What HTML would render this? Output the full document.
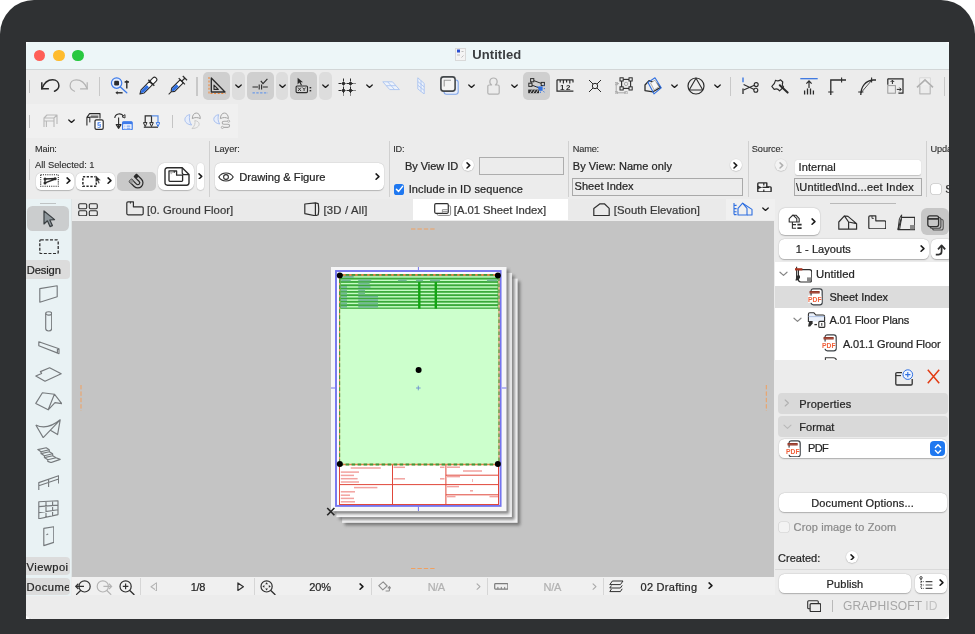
<!DOCTYPE html>
<html lang="en"><head><meta charset="utf-8"><title>Untitled</title>
<style>
html,body{margin:0;padding:0;}
body{width:975px;height:634px;overflow:hidden;background:#fff;position:relative;font-family:"Liberation Sans",sans-serif;}
#root{position:absolute;left:0;top:0;width:975px;height:634px;overflow:hidden;will-change:transform;}
#root div,#root span,#root svg{position:absolute;display:block;}
#root span{white-space:nowrap;-webkit-text-stroke:0.23px currentColor;}
</style></head>
<body>
<div id="root">
<div style="left:0px;top:0px;width:975px;height:634px;background:#2f3133;border-radius:34px 34px 0 0;"></div>
<div style="left:26px;top:42px;width:923px;height:577px;background:#ececec;border-radius:0 0 5px 5px;box-shadow:0 0 0 0 #fff;"></div>
<div style="left:26px;top:42px;width:923px;height:27px;background:#edf6f8;"></div>
<div style="left:26px;top:69px;width:923px;height:1px;background:#d2d6d7;"></div>
<div style="left:33.6px;top:49.7px;width:11.8px;height:11.8px;background:#fe5f57;border-radius:5.9px;"></div>
<div style="left:53.1px;top:49.7px;width:11.8px;height:11.8px;background:#febc2e;border-radius:5.9px;"></div>
<div style="left:72.3px;top:49.7px;width:11.8px;height:11.8px;background:#28c840;border-radius:5.9px;"></div>
<svg style="left:454.7px;top:48.3px;" width="11" height="13" viewBox="0 0 11 13"><rect x="0.5" y="0.5" width="10" height="12" fill="#f4f4f4" stroke="#d9d9d9"/><rect x="2" y="1.5" width="3" height="3" fill="#2a4fd0"/><path d="M2 7h3M6.5 3.5h2M6.5 9.5l2 -2" stroke="#bdbdbd" fill="none"/></svg>
<span style="left:472.3px;top:47px;height:16px;line-height:16px;font-size:13px;color:#3a3d40;font-weight:bold;letter-spacing:0.077px;-webkit-text-stroke:0;">Untitled</span>
<svg style="left:26px;top:42px" width="5" height="5" viewBox="0 0 5 5"><path d="M0 0 H5 Q0 0 0 5 Z" fill="#fbfdfd"/></svg>
<svg style="left:944px;top:42px" width="5" height="5" viewBox="0 0 5 5"><path d="M5 0 H0 Q5 0 5 5 Z" fill="#fbfdfd"/></svg>
<div style="left:26px;top:70px;width:923px;height:69px;background:#ececec;"></div>
<div style="left:26px;top:104px;width:212px;height:34px;background:#f0f0f0;"></div>
<div style="left:28.95px;top:80px;width:1.1px;height:12.5px;background:#bdbdbd;"></div>
<svg style="left:40px;top:78px;" width="21" height="15" viewBox="0 0 21 15"><path d="M1.8 10.8 C4 5 8 1.8 12.6 1.8 C16.5 1.8 18.9 4.5 18.9 7.7 C18.9 10 17 12 14.5 13.2" fill="none" stroke="#2b2b2b" stroke-width="1.5" stroke-linecap="round"/><path d="M1.8 4.3 V10.8 H8.9" fill="none" stroke="#2b2b2b" stroke-width="1.5" stroke-linecap="butt" stroke-linejoin="miter"/></svg>
<svg style="left:68.4px;top:78px;" width="21" height="15" viewBox="0 0 21 15"><g transform="translate(21,0) scale(-1,1)"><path d="M1.8 10.8 C4 5 8 1.8 12.6 1.8 C16.5 1.8 18.9 4.5 18.9 7.7 C18.9 10 17 12 14.5 13.2" fill="none" stroke="#b4b4b4" stroke-width="1.2" stroke-linecap="round"/><path d="M1.8 4.3 V10.8 H8.9" fill="none" stroke="#b4b4b4" stroke-width="1.2" stroke-linecap="butt" stroke-linejoin="miter"/></g></svg>
<div style="left:98.65px;top:76.5px;width:1.1px;height:19.5px;background:#c8c8c8;"></div>
<svg style="left:110.2px;top:77.2px;" width="20" height="18" viewBox="0 0 20 18"><circle cx="6.6" cy="6.1" r="5.2" fill="#e3ebfb" stroke="#3d7bea" stroke-width="1.2"/><path d="M10.4 9.9 L16.8 15.8" stroke="#3d7bea" stroke-width="1.3" stroke-linecap="round"/><rect x="4.2" y="3.7" width="4.8" height="4.8" rx="1.2" fill="#2b2b2b"/><path d="M16.8 11.6 V4.6 M14.6 5 H19" fill="none" stroke="#2b2b2b" stroke-width="1.4"/><path d="M15 4.9 L16.8 3 L18.6 4.9 Z" fill="#2b2b2b"/><path d="M12.6 15.8 H7" fill="none" stroke="#2b2b2b" stroke-width="1.4"/><path d="M7.6 14 L5.4 15.8 L7.6 17.6 Z" fill="#2b2b2b"/></svg>
<svg style="left:135px;top:72.6px;" width="26" height="26" viewBox="0 0 26 26"><g transform="translate(13 13) rotate(45)"><path d="M-2.2 -4.2 V7.6 L0 11.4 L2.2 7.6 V-4.2 Z" fill="#fff" stroke="#2b2b2b" stroke-width="1.1" stroke-linejoin="round"/><path d="M-1.6 0.2 V7.6 L0 10.4 L1.6 7.6 V0.2 Z" fill="#2f6fe0"/><rect x="-2.3" y="-11.4" width="4.6" height="7" rx="2.1" fill="#fff" stroke="#2b2b2b" stroke-width="1.1"/><rect x="-4.2" y="-5.4" width="8.4" height="1.4" fill="#2b2b2b"/></g></svg>
<svg style="left:164.1px;top:72.9px;" width="26" height="26" viewBox="0 0 26 26"><g transform="translate(13 13) rotate(45)"><path d="M-2.2 -6.6 V5.4 L-0.6 7.6 H0.6 L2.2 5.4 V-6.6 Z" fill="#fff" stroke="#2b2b2b" stroke-width="1.1" stroke-linejoin="round"/><path d="M-1.6 -0.8 V5.2 L-0.4 7 H0.4 L1.6 5.2 V-0.8 Z" fill="#2f6fe0"/><path d="M0 7.6 V11.8" stroke="#2b2b2b" stroke-width="1"/><path d="M-4.4 -6.8 H4.4 M0 -6.8 V-11 M-3 -11.2 H3" stroke="#2b2b2b" stroke-width="1.2" fill="none"/></g></svg>
<div style="left:196.45px;top:76.5px;width:1.1px;height:19.5px;background:#c8c8c8;"></div>
<div style="left:203.3px;top:72px;width:27.1px;height:27.5px;background:#cfcfcf;border-radius:5px;"></div>
<div style="left:232.3px;top:72px;width:12.5px;height:27.5px;background:#dddddd;border-radius:5px;"></div>
<svg style="left:235.09px;top:84.16px;" width="7.02" height="4.68" viewBox="0 0 9 6"><path d="M1 1.2 L4.5 4.4 L8 1.2" fill="none" stroke="#1a1a1a" stroke-width="1.6" stroke-linecap="round" stroke-linejoin="round"/></svg>
<svg style="left:207.8px;top:75.8px;" width="18" height="19" viewBox="0 0 18 19"><path d="M1 1 V17.5 H17.5" fill="none" stroke="#f0883a" stroke-width="1.1" stroke-dasharray="2 1.6"/><path d="M3.3 2 V16 H17 Z" fill="none" stroke="#2b2b2b" stroke-width="1.3" stroke-linejoin="round"/><path d="M6 9.2 V13.4 H10.3 Z" fill="none" stroke="#2b2b2b" stroke-width="1.1" stroke-linejoin="round"/></svg>
<div style="left:246.6px;top:72px;width:27.4px;height:27.5px;background:#cfcfcf;border-radius:5px;"></div>
<div style="left:275.9px;top:72px;width:12.5px;height:27.5px;background:#dddddd;border-radius:5px;"></div>
<svg style="left:278.69px;top:84.16px;" width="7.02" height="4.68" viewBox="0 0 9 6"><path d="M1 1.2 L4.5 4.4 L8 1.2" fill="none" stroke="#1a1a1a" stroke-width="1.6" stroke-linecap="round" stroke-linejoin="round"/></svg>
<svg style="left:251.2px;top:77.5px;" width="18" height="16" viewBox="0 0 18 16"><path d="M1.5 9 H7 M8.2 6.6 V11.4 M10.6 6.6 V11.4 M11.8 9 H16.8" stroke="#2b2b2b" stroke-width="1.1" fill="none"/><path d="M9.8 2.8 L12 5.6 L16.4 0.8" fill="none" stroke="#2b2b2b" stroke-width="1.1"/><path d="M1.5 14.8 H17" stroke="#6d9be8" stroke-width="1.2" stroke-dasharray="2.4 1.4"/></svg>
<div style="left:290.2px;top:72px;width:27.3px;height:27.5px;background:#cfcfcf;border-radius:5px;"></div>
<div style="left:319.1px;top:72px;width:12.9px;height:27.5px;background:#dddddd;border-radius:5px;"></div>
<svg style="left:321.99px;top:84.16px;" width="7.02" height="4.68" viewBox="0 0 9 6"><path d="M1 1.2 L4.5 4.4 L8 1.2" fill="none" stroke="#1a1a1a" stroke-width="1.6" stroke-linecap="round" stroke-linejoin="round"/></svg>
<svg style="left:295px;top:77px;" width="18" height="17" viewBox="0 0 18 17"><path d="M2.6 0.8 V7.4 L4.4 5.6 L6 8.6 L7 8 L5.6 5.2 H8 Z" fill="#2b2b2b"/><rect x="1.1" y="9" width="11.4" height="6.6" rx="1" fill="none" stroke="#2b2b2b" stroke-width="1.1"/><path d="M3 10.6 L6 14 M6 10.6 L3 14 M7.6 10.6 L9.1 12.3 L10.6 10.6 M9.1 12.3 V14" stroke="#2b2b2b" stroke-width="0.9" fill="none"/><rect x="14.6" y="10" width="1.6" height="1.4" fill="#2b2b2b"/><rect x="14.6" y="13" width="1.6" height="1.4" fill="#2b2b2b"/></svg>
<svg style="left:338.4px;top:77.8px;" width="18" height="18" viewBox="0 0 18 18"><path d="M0.5 5.5 H17.5 M0.5 12.5 H17.5 M5.5 0.5 V17.5 M12.5 0.5 V17.5" stroke="#2b2b2b" stroke-width="1" stroke-dasharray="3 1" fill="none"/><circle cx="5.5" cy="5.5" r="1.7" fill="#2b2b2b"/><circle cx="12.5" cy="5.5" r="1.7" fill="#2b2b2b"/><circle cx="5.5" cy="12.5" r="1.7" fill="#2b2b2b"/><circle cx="12.5" cy="12.5" r="1.7" fill="#2b2b2b"/></svg>
<svg style="left:366.09px;top:84.16px;" width="7.02" height="4.68" viewBox="0 0 9 6"><path d="M1 1.2 L4.5 4.4 L8 1.2" fill="none" stroke="#1a1a1a" stroke-width="1.6" stroke-linecap="round" stroke-linejoin="round"/></svg>
<svg style="left:382.1px;top:81.4px;" width="18.2" height="9.4" viewBox="0 0 18.2 9.4"><path d="M0.8 0.8 H10.5 L17.4 8.6 H7.8 Z" fill="#eef3fb" stroke="#a9c3f0" stroke-width="0.9" stroke-linejoin="round"/><path d="M5.65 0.8 L12.6 8.6 M4.3 4.7 H13.95" fill="none" stroke="#a9c3f0" stroke-width="0.9"/></svg>
<svg style="left:416.6px;top:76.8px;" width="8" height="17.6" viewBox="0 0 8 17.6"><path d="M0.8 0.8 L7.2 6.4 V17 L0.8 11.9 Z" fill="#eef3fb" stroke="#a9c3f0" stroke-width="0.9" stroke-linejoin="round"/><path d="M4 3.6 V14.4 M0.8 4.5 L7.2 9.9 M0.8 8.2 L7.2 13.4" fill="none" stroke="#a9c3f0" stroke-width="0.9"/></svg>
<svg style="left:439.7px;top:76.2px;" width="19" height="19" viewBox="0 0 19 19"><rect x="4" y="4" width="14.2" height="14.2" rx="2.4" fill="#e8eefa" stroke="#7fa5ea" stroke-width="1.1"/><rect x="0.9" y="0.9" width="14.2" height="14.2" rx="2.6" fill="#f4f4f4" stroke="#43474a" stroke-width="1.6"/><path d="M4.2 10.6 V4.2 H11" fill="none" stroke="#9a9a9a" stroke-width="1.1"/></svg>
<svg style="left:467.59px;top:84.16px;" width="7.02" height="4.68" viewBox="0 0 9 6"><path d="M1 1.2 L4.5 4.4 L8 1.2" fill="none" stroke="#1a1a1a" stroke-width="1.6" stroke-linecap="round" stroke-linejoin="round"/></svg>
<svg style="left:486.6px;top:76.5px;" width="13" height="18" viewBox="0 0 13 18"><path d="M4.6 8 C1.6 5.6 2.6 1 6.5 1 C10.4 1 11.4 5.6 8.4 8 H10.8 Q12.2 8 12.2 9.4 V15.8 Q12.2 17.2 10.8 17.2 H2.2 Q0.8 17.2 0.8 15.8 V9.4 Q0.8 8 2.2 8 Z" fill="none" stroke="#b2b2b2" stroke-width="1.2" stroke-linejoin="round"/></svg>
<svg style="left:511.09px;top:84.16px;" width="7.02" height="4.68" viewBox="0 0 9 6"><path d="M1 1.2 L4.5 4.4 L8 1.2" fill="none" stroke="#1a1a1a" stroke-width="1.6" stroke-linecap="round" stroke-linejoin="round"/></svg>
<div style="left:522.6px;top:72px;width:27.8px;height:27.5px;background:#cfcfcf;border-radius:5px;"></div>
<svg style="left:527.4px;top:77.5px;" width="18" height="17" viewBox="0 0 18 17"><path d="M5.2 2 L15.8 6 M3.4 6.6 L12 9.8 M5.2 2 L3.4 6.6" fill="none" stroke="#2b2b2b" stroke-width="1"/><rect x="3.6" y="0.6" width="3.2" height="3.2" fill="#cfcfcf" stroke="#2b2b2b" stroke-width="1"/><rect x="14.2" y="4.4" width="3.2" height="3.2" fill="#cfcfcf" stroke="#2b2b2b" stroke-width="1"/><rect x="1.8" y="5.2" width="3.2" height="3.2" fill="#cfcfcf" stroke="#2b2b2b" stroke-width="1"/><rect x="11.2" y="8.4" width="4.4" height="4.4" fill="#2f6fe0"/><path d="M16.4 8 L17.6 6.8 M16.8 10.6 H18 M16.4 13.2 L17.6 14.4 M13.4 13.6 V15 M10.4 9 L9.4 8" stroke="#2f6fe0" stroke-width="0.9"/><rect x="1.2" y="11.6" width="10.8" height="3.6" fill="#2b2b2b"/><path d="M3 15.2 L5.4 11.6 M6 15.2 L8.4 11.6 M9 15.2 L11.4 11.6" stroke="#cfcfcf" stroke-width="0.9"/></svg>
<svg style="left:556.2px;top:78.7px;" width="18" height="14" viewBox="0 0 18 14"><path d="M1 0.8 V12.2 H17.4 M1 0.8 H17.4 M4.2 0.8 V3.4 M7.4 0.8 V4.6 M10.6 0.8 V3.4 M13.8 0.8 V4.6 M17 0.8 V3.4" fill="none" stroke="#2b2b2b" stroke-width="1.2"/><text x="10" y="11" font-size="8" font-weight="bold" font-family="Liberation Sans, sans-serif" text-anchor="middle" fill="#2b2b2b" letter-spacing="1.5">12</text></svg>
<svg style="left:587.5px;top:78.7px;" width="14" height="14" viewBox="0 0 14 14"><path d="M1 1 L13 13 M13 1 L1 13" stroke="#2b2b2b" stroke-width="1"/><circle cx="7" cy="7" r="2.7" fill="#ececec" stroke="#2b2b2b" stroke-width="1"/></svg>
<svg style="left:615px;top:76.8px;" width="18" height="17" viewBox="0 0 18 17"><path d="M1.2 6.6 V15.8 H11 M1.2 6.6 H4" fill="none" stroke="#a9a9a9" stroke-width="1"/><rect x="0" y="5.4" width="2.4" height="2.4" fill="none" stroke="#a9a9a9" stroke-width="0.8"/><rect x="0" y="14.6" width="2.4" height="2.4" fill="none" stroke="#a9a9a9" stroke-width="0.8"/><rect x="9.8" y="14.6" width="2.4" height="2.4" fill="none" stroke="#a9a9a9" stroke-width="0.8"/><rect x="6.6" y="2.4" width="9" height="9" fill="none" stroke="#2b2b2b" stroke-width="1.1"/><circle cx="11.1" cy="6.9" r="1.7" fill="none" stroke="#9a9a9a" stroke-width="0.8"/><rect x="5" y="0.8" width="3.2" height="3.2" fill="#ececec" stroke="#2b2b2b" stroke-width="1"/><rect x="14" y="0.8" width="3.2" height="3.2" fill="#ececec" stroke="#2b2b2b" stroke-width="1"/><rect x="5" y="9.8" width="3.2" height="3.2" fill="#ececec" stroke="#2b2b2b" stroke-width="1"/><rect x="14" y="9.8" width="3.2" height="3.2" fill="#ececec" stroke="#2b2b2b" stroke-width="1"/></svg>
<svg style="left:644px;top:76.5px;" width="18" height="18" viewBox="0 0 18 18"><path d="M1 13.6 V8 L5 3.6 L12 5.8 L16.6 10.4 L9 14.8 Z" fill="none" stroke="#2b2b2b" stroke-width="1.3" stroke-linejoin="round"/><path d="M4 5.4 L11 0.8 L17.2 10.8 L10 16.8 Z" fill="none" stroke="#2f6fe0" stroke-width="1.1" stroke-linejoin="round"/><path d="M6.6 6 L11 3.2 L14.8 9.6 L10.2 13 Z" fill="#f7f7f7" stroke="#9a9a9a" stroke-width="0.7"/></svg>
<svg style="left:670.79px;top:84.16px;" width="7.02" height="4.68" viewBox="0 0 9 6"><path d="M1 1.2 L4.5 4.4 L8 1.2" fill="none" stroke="#1a1a1a" stroke-width="1.6" stroke-linecap="round" stroke-linejoin="round"/></svg>
<svg style="left:687px;top:76.7px;" width="18" height="18" viewBox="0 0 18 18"><circle cx="9" cy="9" r="8" fill="none" stroke="#2b2b2b" stroke-width="1.2"/><path d="M9 1.2 L15.8 13 H2.2 Z" fill="none" stroke="#2b2b2b" stroke-width="1.1" stroke-linejoin="round"/></svg>
<svg style="left:714.49px;top:84.16px;" width="7.02" height="4.68" viewBox="0 0 9 6"><path d="M1 1.2 L4.5 4.4 L8 1.2" fill="none" stroke="#1a1a1a" stroke-width="1.6" stroke-linecap="round" stroke-linejoin="round"/></svg>
<div style="left:730.35px;top:76.5px;width:1.1px;height:19.5px;background:#c8c8c8;"></div>
<svg style="left:741.8px;top:76.8px;" width="18" height="17.6" viewBox="0 0 18 17.6"><path d="M1 0.4 V5.2" stroke="#2f6fe0" stroke-width="1.3"/><path d="M1 11.6 V17" stroke="#2b2b2b" stroke-width="1.3"/><path d="M1.6 7.4 L12.2 12.4 M1.6 13 L12.4 8.2" stroke="#2b2b2b" stroke-width="1.1"/><circle cx="14.2" cy="7.6" r="2" fill="none" stroke="#2b2b2b" stroke-width="1.1"/><circle cx="13.8" cy="13.2" r="2" fill="none" stroke="#2b2b2b" stroke-width="1.1"/></svg>
<svg style="left:770.5px;top:78.5px;" width="18" height="15" viewBox="0 0 18 15"><path d="M4.6 1.2 C6.4 2.4 8.2 1.8 9.6 0.8 L11.8 3 C11 5 11.4 6.8 12.6 8 L8.6 11.8 C7.2 10 5 9.6 3.2 10.4 L0.8 7.4 C2.6 6 4.2 3.6 4.6 1.2 Z" fill="none" stroke="#2b2b2b" stroke-width="1.1" stroke-linejoin="round"/><path d="M8.8 6.2 L16.6 13.6" stroke="#2b2b2b" stroke-width="2" stroke-linecap="round"/></svg>
<svg style="left:799.7px;top:77.5px;" width="18" height="17" viewBox="0 0 18 17"><path d="M0.3 0.7 H17.7" stroke="#2f6fe0" stroke-width="1.2"/><path d="M9 10 V3.2 M6.4 5.6 L9 2.8 L11.6 5.6" fill="none" stroke="#2b2b2b" stroke-width="1.2"/><path d="M4.6 16.6 V12.4 M7.5 16.6 V10.6 M10.5 16.6 V10.6 M13.4 16.6 V12.4" stroke="#2b2b2b" stroke-width="1.3"/></svg>
<svg style="left:828.3px;top:76.5px;" width="18" height="18" viewBox="0 0 18 18"><path d="M2.8 18 V3 H18" fill="none" stroke="#2b2b2b" stroke-width="1.3"/><path d="M13.6 0.4 V5.6 M0.2 15 H5.4" stroke="#2b2b2b" stroke-width="1.1"/></svg>
<svg style="left:857.6px;top:76.5px;" width="18" height="18" viewBox="0 0 18 18"><path d="M2.8 18 C2.8 9 8 3.6 15 3 H18" fill="none" stroke="#2b2b2b" stroke-width="1.3"/><path d="M2.8 16 L13.6 3.4" fill="none" stroke="#2b2b2b" stroke-width="0.8"/><path d="M13.6 0.4 V5.6 M0.2 15 H5.4" stroke="#2b2b2b" stroke-width="1.1"/></svg>
<svg style="left:887.3px;top:77.7px;" width="17" height="16" viewBox="0 0 17 16"><path d="M0.8 0.8 H16 V15.2 H11.4" fill="none" stroke="#2b2b2b" stroke-width="1.2"/><path d="M0.8 0.8 V6.8" stroke="#2b2b2b" stroke-width="1.2"/><rect x="0.8" y="7.6" width="7.6" height="7.6" fill="none" stroke="#9a9a9a" stroke-width="1"/><path d="M5.4 6 V2.4 M3.6 4 L5.4 2.2 L7.2 4 M9.8 11.4 H14 M12.4 9.6 L14.2 11.4 L12.4 13.2" fill="none" stroke="#2b2b2b" stroke-width="1"/></svg>
<svg style="left:916px;top:77px;" width="18" height="18" viewBox="0 0 18 18"><path d="M3.6 8 V0.8 H14.4 V8" fill="#f1f1f1" stroke="#d6d6d6" stroke-width="0.9"/><path d="M1 10.4 L9 3 L17 10.4" fill="none" stroke="#b0b0b0" stroke-width="1.7" stroke-linejoin="miter"/><path d="M3.8 9 V16.8 H14.2 V9" fill="none" stroke="#bababa" stroke-width="1.2" stroke-linejoin="round"/></svg>
<div style="left:943.75px;top:76.5px;width:1.1px;height:19.5px;background:#c8c8c8;"></div>
<div style="left:29.25px;top:115.3px;width:1.1px;height:13.1px;background:#bdbdbd;"></div>
<svg style="left:42.5px;top:114.3px;" width="15" height="14" viewBox="0 0 15 14"><path d="M1 13 V4 L4 1 H14 V10 M1 4 H11 L14 1 M11 4 V13 M1 7 H11 M3.4 13 V7" fill="none" stroke="#b9b9b9" stroke-width="1.1" stroke-linejoin="round"/></svg>
<svg style="left:68.29px;top:119.46px;" width="7.02" height="4.68" viewBox="0 0 9 6"><path d="M1 1.2 L4.5 4.4 L8 1.2" fill="none" stroke="#1a1a1a" stroke-width="1.6" stroke-linecap="round" stroke-linejoin="round"/></svg>
<svg style="left:85.6px;top:112px;" width="18" height="18" viewBox="0 0 18 18"><path d="M0.9 13.6 V5.4 L3.6 1.6 H14 V6.6 M0.9 5.4 H4" fill="none" stroke="#2b2b2b" stroke-width="1.1" stroke-linejoin="round"/><path d="M3.8 10.4 V6 L5 4.4" fill="none" stroke="#2b2b2b" stroke-width="1"/><path d="M5 3.4 H12.4 V6 H4.2 Z" fill="#6f6f6f"/><rect x="9" y="7.8" width="8.2" height="9.6" rx="1.4" fill="#fff" stroke="#2b2b2b" stroke-width="1.2"/><text x="13.1" y="15.4" font-size="7.6" font-weight="bold" font-family="Liberation Sans, sans-serif" text-anchor="middle" fill="#3d7bea">§</text></svg>
<svg style="left:113.5px;top:112.5px;" width="19" height="17.4" viewBox="0 0 19 17.4"><path d="M4.6 4.4 V15 M2.2 11.6 L4.6 15.4 L7 11.6 Z" fill="none" stroke="#2b2b2b" stroke-width="1.1" stroke-linejoin="round"/><path d="M0.8 5 C1 0.4 7.6 -0.6 9.4 3.2" fill="none" stroke="#2b2b2b" stroke-width="1.1"/><path d="M8 3.8 L11 1.6 V5 Z" fill="none" stroke="#2b2b2b" stroke-width="0.9" stroke-linejoin="round"/><rect x="8.6" y="8.8" width="9.6" height="8" rx="1" fill="#fff" stroke="#3d7bea" stroke-width="1.2"/><rect x="8.6" y="8.6" width="9.6" height="2.6" fill="#3d7bea"/><path d="M10.4 13.1 H11.4 M12.6 13.1 H16.4 M10.4 15.2 H11.4 M12.6 15.2 H16.4" stroke="#3d7bea" stroke-width="0.9"/></svg>
<svg style="left:143.1px;top:114.9px;" width="17" height="13.4" viewBox="0 0 17 13.4"><path d="M2.2 8 V0.8 H8.5 V8" fill="none" stroke="#2b2b2b" stroke-width="1.2"/><path d="M8.5 0.8 H15 V8" fill="none" stroke="#5b8fe6" stroke-width="1.2"/><path d="M0.8 12.2 H15" stroke="#2b2b2b" stroke-width="1.2"/><path d="M0.4 7.6 H4 L2.2 11.6 Z M6.7 7.6 H10.3 L8.5 11.6 Z" fill="#f0f0f0" stroke="#2b2b2b" stroke-width="1" stroke-linejoin="round"/><path d="M13.2 7.6 H16.8 L15 11.6 Z" fill="#f0f0f0" stroke="#3d7bea" stroke-width="1" stroke-linejoin="round"/></svg>
<div style="left:172.15px;top:115.3px;width:1.1px;height:13.1px;background:#c4c4c4;"></div>
<svg style="left:184px;top:112px;" width="18" height="18" viewBox="0 0 18 18"><path d="M5.8 2.6 C-1 4 -1 12 7.6 13 C5.4 10.4 4.9 6 5.8 2.6 Z" fill="#e6edfb" stroke="#a9c0ee" stroke-width="1"/><path d="M8.3 6.6 C8.3 -0.8 16.3 -0.8 16.3 6.6 C14 5.2 10.6 5.2 8.3 6.6 Z" fill="none" stroke="#a4a4a4" stroke-width="1"/><path d="M10.8 8.6 C17 9.2 17 16.2 8 16.6 C10.6 14 11.6 11.2 10.8 8.6 Z" fill="none" stroke="#cbcbcb" stroke-width="1"/></svg>
<svg style="left:213px;top:112px;" width="18" height="18" viewBox="0 0 18 18"><path d="M5.6 2.6 C-1 4 -1 11 6.8 12 C5 9.8 4.6 5.8 5.6 2.6 Z" fill="#e6edfb" stroke="#a9c0ee" stroke-width="1"/><path d="M7.4 6.6 C7.4 -0.8 15.4 -0.8 15.4 6.6 C13.1 5.2 9.7 5.2 7.4 6.6 Z" fill="none" stroke="#a4a4a4" stroke-width="1"/><path d="M14.6 9.2 H11 C8.6 9.2 8.6 12.3 11 12.3 H14.8 C17.2 12.3 17.2 15.4 14.8 15.4 H10.4" fill="none" stroke="#ababab" stroke-width="1.1"/><circle cx="15.6" cy="9.2" r="1.1" fill="#f0f0f0" stroke="#ababab" stroke-width="0.9"/><circle cx="9.4" cy="15.4" r="1.1" fill="#f0f0f0" stroke="#ababab" stroke-width="0.9"/></svg>
<div style="left:26px;top:139px;width:923px;height:60px;background:#ececec;"></div>
<div style="left:29.2px;top:158.5px;width:1px;height:21.5px;background:#c9c9c9;"></div>
<span style="left:35px;top:140.5px;height:16px;line-height:16px;font-size:9.2px;color:#2e2e2e;letter-spacing:-0.140px;-webkit-text-stroke:0.12px currentColor;">Main:</span>
<span style="left:214.5px;top:140.5px;height:16px;line-height:16px;font-size:9.2px;color:#2e2e2e;letter-spacing:-0.062px;-webkit-text-stroke:0.12px currentColor;">Layer:</span>
<span style="left:393.3px;top:140.5px;height:16px;line-height:16px;font-size:9.2px;color:#2e2e2e;letter-spacing:-0.252px;-webkit-text-stroke:0.12px currentColor;">ID:</span>
<span style="left:572.8px;top:140.5px;height:16px;line-height:16px;font-size:9.2px;color:#2e2e2e;letter-spacing:-0.180px;-webkit-text-stroke:0.12px currentColor;">Name:</span>
<span style="left:751.8px;top:140.5px;height:16px;line-height:16px;font-size:9.2px;color:#2e2e2e;letter-spacing:-0.072px;-webkit-text-stroke:0.12px currentColor;">Source:</span>
<span style="left:930.6px;top:140.5px;height:16px;line-height:16px;font-size:9.2px;color:#2e2e2e;letter-spacing:-0.175px;-webkit-text-stroke:0.12px currentColor;">Update:</span>
<div style="left:208.8px;top:140.5px;width:1px;height:56.5px;background:#d0d0d0;"></div>
<div style="left:388.5px;top:140.5px;width:1px;height:56.5px;background:#d0d0d0;"></div>
<div style="left:568.3px;top:140.5px;width:1px;height:56.5px;background:#d0d0d0;"></div>
<div style="left:747.5px;top:140.5px;width:1px;height:56.5px;background:#d0d0d0;"></div>
<div style="left:925.8px;top:140.5px;width:1px;height:56.5px;background:#d0d0d0;"></div>
<span style="left:35px;top:157px;height:16px;line-height:16px;font-size:9.4px;color:#2e2e2e;letter-spacing:-0.026px;-webkit-text-stroke:0.12px currentColor;">All Selected: 1</span>
<div style="left:35.7px;top:172.8px;width:38.4px;height:17.2px;background:#ffffff;border-radius:5px;box-shadow:0 0.5px 1.1px rgba(0,0,0,0.22),0 0 0 0.5px rgba(0,0,0,0.04);"></div>
<svg style="left:39.9px;top:174.4px;" width="19" height="13" viewBox="0 0 19 13"><rect x="0.7" y="0.7" width="17.6" height="11.6" fill="none" stroke="#2b2b2b" stroke-width="1.1" stroke-dasharray="1.1 1.1"/><path d="M5 4.9 L15.4 4.6 M5 8.9 L15.4 5" stroke="#2b2b2b" stroke-width="1.5" fill="none"/><path d="M5 4.9 V8.9" stroke="#2b2b2b" stroke-width="1.2"/><circle cx="5" cy="4.9" r="1.5" fill="#2b2b2b"/><circle cx="5" cy="8.9" r="1.5" fill="#2b2b2b"/><circle cx="15.2" cy="4.7" r="1.5" fill="#2b2b2b"/></svg>
<svg style="left:65.8px;top:177px;" width="5.4" height="7.2" viewBox="0 0 6 8"><path d="M1.2 1 L4.4 4 L1.2 7" fill="none" stroke="#1a1a1a" stroke-width="1.7" stroke-linecap="round" stroke-linejoin="round"/></svg>
<div style="left:76.3px;top:172.8px;width:38.9px;height:17.2px;background:#ffffff;border-radius:5px;box-shadow:0 0.5px 1.1px rgba(0,0,0,0.22),0 0 0 0.5px rgba(0,0,0,0.04);"></div>
<svg style="left:81.7px;top:174.6px;" width="19.4" height="12" viewBox="0 0 19.4 12"><rect x="0.9" y="1.8" width="13.4" height="9.4" fill="none" stroke="#2b2b2b" stroke-width="1.5" stroke-dasharray="2.3 1.5"/><path d="M13.6 0.4 V7.4 L15.3 5.9 L16.6 8.7 L17.9 8.1 L16.6 5.4 L18.9 5.2 Z" fill="#2b2b2b" stroke="#fff" stroke-width="0.4"/></svg>
<svg style="left:106.7px;top:177px;" width="5.4" height="7.2" viewBox="0 0 6 8"><path d="M1.2 1 L4.4 4 L1.2 7" fill="none" stroke="#1a1a1a" stroke-width="1.7" stroke-linecap="round" stroke-linejoin="round"/></svg>
<div style="left:117.2px;top:172.4px;width:38.4px;height:18.2px;background:#c9c9c9;border-radius:5px;"></div>
<svg style="left:128.2px;top:172.8px;" width="19" height="19" viewBox="0 0 19 19"><g transform="rotate(-45 9.5 9.5)"><path d="M4.4 3 V10 A5.1 5.1 0 0 0 14.6 10 V3 H11.4 V10 A1.9 1.9 0 0 1 7.6 10 V3 Z" fill="#c9c9c9" stroke="#2b2b2b" stroke-width="1.2" stroke-linejoin="round"/><rect x="4.4" y="2.6" width="3.2" height="3.4" fill="#9a9a9a"/><rect x="11.4" y="2.6" width="3.2" height="3.4" fill="#2b2b2b"/></g></svg>
<div style="left:157.9px;top:163.2px;width:36.6px;height:26.5px;background:#ffffff;border-radius:6.5px;box-shadow:0 0.5px 1.1px rgba(0,0,0,0.22),0 0 0 0.5px rgba(0,0,0,0.04);"></div>
<svg style="left:163.5px;top:166.9px;" width="26" height="19" viewBox="0 0 26 19"><path d="M1 3.2 Q1 0.8 3.4 0.8 H18.2 L25 7.6 V15.8 Q25 18.2 22.6 18.2 H3.4 Q1 18.2 1 15.8 Z" fill="none" stroke="#2b2b2b" stroke-width="1.4" stroke-linejoin="round"/><path d="M18.2 0.8 V5.4 Q18.2 7.6 20.4 7.6 H25" fill="none" stroke="#2b2b2b" stroke-width="1.2"/><path d="M5 4 H12.6 V8.2 H18.6 V13.6 Q18.6 14.4 17.8 14.4 H5.8 Q5 14.4 5 13.6 Z" fill="none" stroke="#2b2b2b" stroke-width="1.3" stroke-linejoin="round"/><path d="M5.6 4.4 H10 L7 7.4 Z" fill="#b9b9b9"/><path d="M10.2 4 V6" stroke="#2b2b2b" stroke-width="1"/></svg>
<div style="left:196.5px;top:163.1px;width:7.4px;height:27px;background:#ffffff;border-radius:3.7px;box-shadow:0 0.5px 1.1px rgba(0,0,0,0.22),0 0 0 0.5px rgba(0,0,0,0.04);"></div>
<svg style="left:198.15px;top:172.6px;" width="5.1" height="6.8" viewBox="0 0 6 8"><path d="M1.2 1 L4.4 4 L1.2 7" fill="none" stroke="#1a1a1a" stroke-width="1.7" stroke-linecap="round" stroke-linejoin="round"/></svg>
<div style="left:214.6px;top:163.2px;width:169px;height:26.8px;background:#ffffff;border-radius:5.5px;box-shadow:0 0.5px 1.1px rgba(0,0,0,0.22),0 0 0 0.5px rgba(0,0,0,0.04);"></div>
<svg style="left:217.7px;top:172px;" width="16" height="10" viewBox="0 0 16 10"><path d="M0.8 5 C4 -0.4 12 -0.4 15.2 5 C12 10.4 4 10.4 0.8 5 Z" fill="none" stroke="#2b2b2b" stroke-width="1.1"/><circle cx="8" cy="5" r="2.4" fill="none" stroke="#2b2b2b" stroke-width="1.1"/></svg>
<span style="left:239.2px;top:169px;height:16px;line-height:16px;font-size:11.2px;color:#262626;letter-spacing:-0.008px;">Drawing &amp; Figure</span>
<svg style="left:374.5px;top:172.8px;" width="5.4" height="7.2" viewBox="0 0 6 8"><path d="M1.2 1 L4.4 4 L1.2 7" fill="none" stroke="#1a1a1a" stroke-width="1.7" stroke-linecap="round" stroke-linejoin="round"/></svg>
<span style="left:404.9px;top:158px;height:16px;line-height:16px;font-size:11px;color:#262626;letter-spacing:-0.029px;">By View ID</span>
<div style="left:462px;top:159.4px;width:12px;height:12px;background:#fff;border-radius:6px;box-shadow:0 0.5px 1.1px rgba(0,0,0,0.22),0 0 0 0.5px rgba(0,0,0,0.04);"></div>
<svg style="left:465.85px;top:162px;" width="5.1" height="6.8" viewBox="0 0 6 8"><path d="M1.2 1 L4.4 4 L1.2 7" fill="none" stroke="#1a1a1a" stroke-width="1.7" stroke-linecap="round" stroke-linejoin="round"/></svg>
<div style="left:478.5px;top:157.2px;width:85.1px;height:18px;background:#ececec;box-sizing:border-box;border:1.6px solid #adadad;"></div>
<div style="left:393.6px;top:184px;width:10.8px;height:10.6px;background:#1f78f0;border-radius:2.6px;"></div>
<svg style="left:394.5px;top:185.3px;" width="9" height="8" viewBox="0 0 9 8"><path d="M1.4 4.2 L3.6 6.4 L7.6 1.4" fill="none" stroke="#fff" stroke-width="1.5" stroke-linecap="round" stroke-linejoin="round"/></svg>
<span style="left:408.7px;top:181.3px;height:16px;line-height:16px;font-size:11px;color:#262626;letter-spacing:0.109px;">Include in ID sequence</span>
<span style="left:572.8px;top:158px;height:16px;line-height:16px;font-size:11px;color:#262626;letter-spacing:0.054px;">By View: Name only</span>
<div style="left:729.6px;top:159.4px;width:12px;height:12px;background:#fff;border-radius:6px;box-shadow:0 0.5px 1.1px rgba(0,0,0,0.22),0 0 0 0.5px rgba(0,0,0,0.04);"></div>
<svg style="left:733.45px;top:162px;" width="5.1" height="6.8" viewBox="0 0 6 8"><path d="M1.2 1 L4.4 4 L1.2 7" fill="none" stroke="#1a1a1a" stroke-width="1.7" stroke-linecap="round" stroke-linejoin="round"/></svg>
<div style="left:572px;top:177.6px;width:170.8px;height:18.2px;background:#ececec;box-sizing:border-box;border:1.6px solid #a9a9a9;"></div>
<span style="left:574.6px;top:178.4px;height:16px;line-height:16px;font-size:11px;color:#262626;letter-spacing:0.026px;">Sheet Index</span>
<div style="left:775px;top:159.2px;width:12px;height:12px;background:#f3f3f3;border-radius:6px;box-shadow:0 0.5px 1.1px rgba(0,0,0,0.22),0 0 0 0.5px rgba(0,0,0,0.04);"></div>
<svg style="left:778.85px;top:161.8px;" width="5.1" height="6.8" viewBox="0 0 6 8"><path d="M1.2 1 L4.4 4 L1.2 7" fill="none" stroke="#b0b0b0" stroke-width="1.7" stroke-linecap="round" stroke-linejoin="round"/></svg>
<div style="left:795px;top:159.6px;width:126px;height:15px;background:#ffffff;border-radius:2.5px;box-shadow:0 0.5px 1px rgba(0,0,0,0.18);"></div>
<span style="left:798.6px;top:159.2px;height:16px;line-height:16px;font-size:11px;color:#262626;letter-spacing:0.064px;">Internal</span>
<svg style="left:756.5px;top:181.5px;" width="15" height="10.8" viewBox="0 0 15 10.8"><path d="M1.6 0.9 H9.8 V4.9 H13.3 Q14.1 4.9 14.1 5.7 V9.1 Q14.1 9.9 13.3 9.9 H1.6 Q0.8 9.9 0.8 9.1 V1.7 Q0.8 0.9 1.6 0.9 Z" fill="#f7f7f7" stroke="#2b2b2b" stroke-width="1.4" stroke-linejoin="round"/><path d="M0.8 4.4 L3.6 5.4 L0.8 6.4 M6.8 0.9 V3.4 M6.8 7.4 V9.9 M5.4 5.4 H12" fill="none" stroke="#2b2b2b" stroke-width="1.2"/></svg>
<div style="left:794.3px;top:177.6px;width:127.3px;height:18px;background:#ececec;box-sizing:border-box;border:1.6px solid #a9a9a9;"></div>
<span style="left:796px;top:178.8px;height:16px;line-height:16px;font-size:11px;color:#262626;letter-spacing:0.195px;">\Untitled\Ind...eet Index</span>
<div style="left:931.3px;top:184px;width:10.2px;height:10.4px;background:#ffffff;border-radius:2.6px;box-shadow:0 0 0 0.6px rgba(0,0,0,0.2);"></div>
<span style="left:945.2px;top:181.3px;height:16px;line-height:16px;font-size:11px;color:#262626;">S</span>
<div style="left:72px;top:198.6px;width:702px;height:21.8px;background:#eaeaea;"></div>
<div style="left:413.3px;top:198.6px;width:154.7px;height:21.8px;background:#ffffff;"></div>
<div style="left:726px;top:198.6px;width:48.5px;height:21.8px;background:#f0f0f0;"></div>
<svg style="left:77.5px;top:202.7px;" width="20" height="13.4" viewBox="0 0 20 13.4"><rect x="0.7" y="0.7" width="8" height="5" rx="1.2" fill="none" stroke="#2f2f2f" stroke-width="1.1"/><rect x="11.3" y="0.7" width="8" height="5" rx="1.2" fill="none" stroke="#2f2f2f" stroke-width="1.1"/><rect x="0.7" y="7.7" width="8" height="5" rx="1.2" fill="none" stroke="#2f2f2f" stroke-width="1.1"/><rect x="11.3" y="7.7" width="8" height="5" rx="1.2" fill="none" stroke="#2f2f2f" stroke-width="1.1"/></svg>
<svg style="left:126.4px;top:201.4px;" width="18" height="14.6" viewBox="0 0 18 14.6"><path d="M0.8 2 Q0.8 0.8 2 0.8 H7.4 V5.8 H16 Q17.2 5.8 17.2 7 V12.6 Q17.2 13.8 16 13.8 H2 Q0.8 13.8 0.8 12.6 Z" fill="none" stroke="#2f2f2f" stroke-width="1.2" stroke-linejoin="round"/><path d="M4.4 0.8 V2.6" stroke="#2f2f2f" stroke-width="1"/></svg>
<span style="left:147px;top:201.6px;height:16px;line-height:16px;font-size:11.3px;color:#3a3a3a;letter-spacing:0.052px;">[0. Ground Floor]</span>
<svg style="left:303.6px;top:201.7px;" width="16" height="14.6" viewBox="0 0 16 14.6"><path d="M0.8 2 L11.4 0.8 V13.8 L0.8 11.6 Z" fill="none" stroke="#2f2f2f" stroke-width="1.2" stroke-linejoin="round"/><path d="M11.4 0.8 L14.2 1.6 Q15.2 7.2 14.2 12.8 L11.4 13.8" fill="none" stroke="#2f2f2f" stroke-width="1.2" stroke-linejoin="round"/></svg>
<span style="left:323.5px;top:201.6px;height:16px;line-height:16px;font-size:11.3px;color:#3a3a3a;letter-spacing:0.192px;">[3D / All]</span>
<svg style="left:434.3px;top:203.3px;" width="17.4" height="13" viewBox="0 0 17.4 13"><rect x="3.2" y="2.8" width="13.4" height="9.6" rx="1.2" fill="none" stroke="#8a8a8a" stroke-width="1"/><rect x="0.7" y="0.7" width="13.6" height="9.6" rx="1.2" fill="#fff" stroke="#2f2f2f" stroke-width="1.2"/><path d="M8.4 10.2 V6.6 H14.2 M8.4 8.4 H14.2" fill="none" stroke="#8a8a8a" stroke-width="0.9"/></svg>
<span style="left:453.8px;top:201.6px;height:16px;line-height:16px;font-size:11.3px;color:#3a3a3a;letter-spacing:-0.043px;">[A.01 Sheet Index]</span>
<svg style="left:593.3px;top:202.5px;" width="17" height="13.4" viewBox="0 0 17 13.4"><path d="M0.8 12.6 V5.4 L7 0.8 H11.4 L16.2 5.4 V12.6 Z" fill="none" stroke="#2f2f2f" stroke-width="1.2" stroke-linejoin="round"/></svg>
<span style="left:613.8px;top:201.6px;height:16px;line-height:16px;font-size:11.3px;color:#3a3a3a;letter-spacing:0.045px;">[South Elevation]</span>
<svg style="left:732.6px;top:202.2px;" width="20" height="14" viewBox="0 0 20 14"><path d="M1 1 V12.6 M1 3.4 H3.6 M1 6.6 H3.6 M1 9.8 H3.6 M1 12.6 H3.6" fill="none" stroke="#2f6fe0" stroke-width="1.1"/><path d="M5 13 V6.4 L9.6 1.2 L14 6.4 V13 Z" fill="none" stroke="#2f6fe0" stroke-width="1.1" stroke-linejoin="round"/><path d="M9.6 1.2 L19 7.4 V13 H14" fill="none" stroke="#2f6fe0" stroke-width="1.1" stroke-linejoin="round"/></svg>
<svg style="left:762.09px;top:207.26px;" width="7.02" height="4.68" viewBox="0 0 9 6"><path d="M1 1.2 L4.5 4.4 L8 1.2" fill="none" stroke="#1a1a1a" stroke-width="1.6" stroke-linecap="round" stroke-linejoin="round"/></svg>
<div style="left:26px;top:199px;width:45px;height:397px;background:#e9f2f4;"></div>
<div style="left:71px;top:199px;width:1px;height:378px;background:#dfe5e6;"></div>
<div style="left:40.2px;top:202.7px;width:16.2px;height:1px;background:#bfc3c4;"></div>
<div style="left:27.3px;top:205.9px;width:42.2px;height:25.3px;background:#cbcdce;border-radius:5.5px;"></div>
<svg style="left:43.1px;top:209.6px;" width="13" height="18" viewBox="0 0 13 18"><path d="M1 1 V14 L4.4 10.8 L7 16.6 L9.4 15.6 L6.8 10 L11.6 9.6 Z" fill="#8e979c" stroke="#3a3f42" stroke-width="1.2" stroke-linejoin="round"/></svg>
<svg style="left:38.8px;top:238.6px;" width="20" height="15.4" viewBox="0 0 20 15.4"><rect x="0.8" y="0.8" width="18.4" height="13.8" rx="1" fill="none" stroke="#2f2f2f" stroke-width="1.3" stroke-dasharray="3 1.6"/></svg>
<div style="left:26px;top:260.4px;width:43.5px;height:18.8px;background:#dcdcdc;border-radius:0 4px 4px 0;"></div>
<span style="left:26.8px;top:262.2px;height:16px;line-height:16px;font-size:11.2px;color:#262626;letter-spacing:-0.144px;">Design</span>
<svg style="left:39.1px;top:284.8px;" width="19" height="18" viewBox="0 0 19 18"><path d="M0.8 3.6 L18.2 0.8 V11.8 L0.8 17.2 Z" fill="none" stroke="#767a7d" stroke-width="1.15" stroke-linejoin="round"/></svg>
<svg style="left:44.9px;top:310.9px;" width="7.4" height="21" viewBox="0 0 7.4 21"><path d="M0.7 2.4 V17.6 A3 2.4 0 0 0 6.7 17.6 V2.4" fill="none" stroke="#767a7d" stroke-width="1.15" stroke-linejoin="round"/><ellipse cx="3.7" cy="2.4" rx="3" ry="1.7" fill="none" stroke="#767a7d" stroke-width="1.15" stroke-linejoin="round"/></svg>
<svg style="left:37.6px;top:341.3px;" width="22" height="13.4" viewBox="0 0 22 13.4"><path d="M0.8 0.8 L21 7.8 V12.6 L0.8 4.8 Z M21 7.8 L19.4 8.6 V12 M0.8 0.8 L2.6 1 " fill="none" stroke="#767a7d" stroke-width="1.15" stroke-linejoin="round"/></svg>
<svg style="left:35.1px;top:366.5px;" width="27" height="15" viewBox="0 0 27 15"><path d="M0.8 9 L6.6 6.4 L5.4 4.6 L14.6 0.8 L26.2 6.8 L10 14.2 Z" fill="none" stroke="#767a7d" stroke-width="1.15" stroke-linejoin="round"/></svg>
<svg style="left:34.8px;top:392.3px;" width="27.6" height="18.6" viewBox="0 0 27.6 18.6"><path d="M0.8 11.4 L7.4 0.8 L19.4 2.2 L26.8 11.6 L20 10.6 L13.2 17.8 Z M19.4 2.2 L13.2 17.8" fill="none" stroke="#767a7d" stroke-width="1.15" stroke-linejoin="round"/></svg>
<svg style="left:35.4px;top:418.7px;" width="26" height="19.4" viewBox="0 0 26 19.4"><path d="M0.8 6 Q12 11.6 25.2 0.8 L22.6 15.6 L15.4 11.2 M0.8 6 L8.2 18.6 L25.2 0.8" fill="none" stroke="#767a7d" stroke-width="1.15" stroke-linejoin="round"/></svg>
<svg style="left:36.8px;top:446.6px;" width="24" height="16.4" viewBox="0 0 24 16.4"><path d="M0.8 2.6 L9.2 0.8 L12.2 2.8 L4 4.8 Z M4 4.8 V6.6 L12.4 4.8 L15.6 6.8 L7.4 8.8 V10.6 L15.8 8.8 L19 10.8 L10.8 12.8 V14.4 L14 15.6 L23.2 12.4 L19 10.8 M4 6.6 L7.4 8.8 M7.4 10.6 L10.8 12.8 M12.2 2.8 L12.4 4.8 M15.6 6.8 L15.8 8.8" fill="none" stroke="#767a7d" stroke-width="1.15" stroke-linejoin="round"/></svg>
<svg style="left:38px;top:474.5px;" width="21.4" height="15.6" viewBox="0 0 21.4 15.6"><path d="M0.8 15 V7.6 L20.6 0.8 V8.4 M0.8 10.8 L20.6 4 M10.6 12 V4.4" fill="none" stroke="#767a7d" stroke-width="1.15" stroke-linejoin="round"/></svg>
<svg style="left:38.4px;top:499.6px;" width="20.6" height="19.4" viewBox="0 0 20.6 19.4"><path d="M0.8 1.8 L20 0.8 V14.6 L0.8 18.8 Z M8 1.4 V17.2 M14.6 1 V15.8 M0.8 6.6 L20 5.2 M0.8 12.6 L20 9.8" fill="none" stroke="#767a7d" stroke-width="1.15" stroke-linejoin="round"/></svg>
<svg style="left:42.7px;top:526.4px;" width="11.6" height="20.4" viewBox="0 0 11.6 20.4"><path d="M0.8 2.4 L10.8 0.8 V16.4 L0.8 19.6 Z M3.4 8.8 L5.2 8" fill="none" stroke="#767a7d" stroke-width="1.15" stroke-linejoin="round"/></svg>
<div style="left:26px;top:557.2px;width:43.5px;height:18px;background:#dcdcdc;border-radius:0 4px 4px 0;"></div>
<div style="left:26px;top:557px;width:43px;height:19px;overflow:hidden;"><span style="left:0.6px;top:1.5px;height:16px;line-height:16px;font-size:11.2px;color:#262626;letter-spacing:0.42px">Viewpoints</span></div>
<div style="left:26px;top:577.8px;width:43.5px;height:17.2px;background:#dcdcdc;border-radius:0 4px 4px 0;"></div>
<div style="left:26px;top:577px;width:43px;height:19px;overflow:hidden;"><span style="left:0.6px;top:1.5px;height:16px;line-height:16px;font-size:11.2px;color:#262626;letter-spacing:0.42px">Document</span></div>
<div style="left:72px;top:220.5px;width:702px;height:356.8px;background:#c4c4c4;"></div>
<svg style="left:72px;top:220px" width="702" height="358" viewBox="0 0 702 358"><path d="M339.00 9.00 H364" stroke="#f0a060" stroke-width="1" stroke-dasharray="4.4 2" fill="none"/><path d="M339.00 348.50 H364" stroke="#f0a060" stroke-width="1" stroke-dasharray="4.4 2" fill="none"/><path d="M9.00 165.00 V191" stroke="#f0a060" stroke-width="1" stroke-dasharray="4.4 2" fill="none"/><path d="M694.30 165.00 V191" stroke="#f0a060" stroke-width="1" stroke-dasharray="4.4 2" fill="none"/><defs><filter id="sh" x="-10%" y="-10%" width="130%" height="130%"><feGaussianBlur stdDeviation="1.7"/></filter><linearGradient id="gr" x1="0" x2="1" y1="0" y2="0"><stop offset="0" stop-color="#fafafa"/><stop offset="0.45" stop-color="#f4f4f4"/><stop offset="1" stop-color="#a8a8a8"/></linearGradient><linearGradient id="gb" x1="0" x2="0" y1="0" y2="1"><stop offset="0" stop-color="#fafafa"/><stop offset="0.45" stop-color="#f4f4f4"/><stop offset="1" stop-color="#a8a8a8"/></linearGradient></defs><rect x="272.70" y="61.20" width="175.50" height="244.20" fill="#666" opacity="0.8" filter="url(#sh)"/><rect x="270.10" y="58.60" width="175.50" height="244.20" fill="#f6f6f7"/><rect x="267.00" y="55.50" width="175.50" height="244.20" fill="#666" opacity="0.8" filter="url(#sh)"/><rect x="264.40" y="52.90" width="175.50" height="244.20" fill="#f6f6f7"/><rect x="261.60" y="49.60" width="175.50" height="244.20" fill="#666" opacity="0.8" filter="url(#sh)"/><rect x="259.00" y="47.00" width="175.50" height="244.20" fill="#f6f6f7"/><rect x="264.00" y="51.00" width="164.60" height="234.90" fill="#fbfbff" stroke="#7474ee" stroke-width="1.9"/><path d="M346.40 47.00 V50 M346.40 286.60 V291 M259.00 168.00 H263 M430.00 168.00 H434.5" stroke="#7474ee" stroke-width="1" fill="none"/><rect x="267.50" y="244.50" width="159.00" height="40.00" fill="#ffffff" stroke="#e0473a" stroke-width="1"/><path d="M267.50 264.60 H427 M320.50 244.50 V284.5 M373.90 244.50 V284.5 M373.90 255.20 H427 M373.90 274.80 H427" stroke="#e0473a" stroke-width="1" fill="none"/><rect x="278.70" y="247.25" width="30.10" height="1.5" fill="#f2a3a0"/><rect x="268.80" y="251.35" width="18.20" height="1.5" fill="#f2a3a0"/><rect x="268.80" y="254.65" width="13.20" height="1.5" fill="#f2a3a0"/><rect x="268.80" y="257.95" width="16.80" height="1.5" fill="#f2a3a0"/><rect x="268.80" y="261.25" width="18.20" height="1.5" fill="#f2a3a0"/><rect x="282.00" y="266.85" width="23.40" height="1.5" fill="#f2a3a0"/><rect x="268.80" y="271.05" width="14.20" height="1.5" fill="#f2a3a0"/><rect x="268.80" y="274.45" width="9.20" height="1.5" fill="#f2a3a0"/><rect x="268.80" y="277.65" width="13.20" height="1.5" fill="#f2a3a0"/><rect x="268.80" y="281.05" width="14.20" height="1.5" fill="#f2a3a0"/><rect x="321.60" y="246.55" width="11.40" height="1.5" fill="#f2a3a0"/><rect x="321.60" y="258.05" width="11.40" height="1.5" fill="#f2a3a0"/><rect x="368.00" y="246.55" width="4.50" height="1.5" fill="#f2a3a0"/><rect x="368.00" y="258.05" width="4.50" height="1.5" fill="#f2a3a0"/><rect x="375.00" y="246.45" width="13.00" height="1.5" fill="#f2a3a0"/><rect x="391.00" y="250.25" width="19.00" height="1.5" fill="#f2a3a0"/><rect x="375.00" y="255.85" width="13.00" height="1.5" fill="#f2a3a0"/><rect x="375.00" y="265.85" width="12.00" height="1.5" fill="#f2a3a0"/><rect x="398.00" y="270.05" width="3.00" height="1.5" fill="#f2a3a0"/><rect x="375.00" y="275.85" width="8.50" height="1.5" fill="#f2a3a0"/><rect x="417.50" y="275.85" width="8.50" height="1.5" fill="#f2a3a0"/><rect x="400" y="259" width="0.8" height="3" fill="#f2a3a0"/><rect x="267.60" y="54.80" width="159.40" height="189.70" fill="#ccffcc"/><rect x="268.20" y="55.30" width="158.00" height="33.50" fill="#3aa93a"/><rect x="268.90" y="56.18" width="156.70" height="1.45" fill="#c6fcc6"/><rect x="268.90" y="59.58" width="156.70" height="1.45" fill="#c6fcc6"/><rect x="268.90" y="62.88" width="156.70" height="1.45" fill="#c6fcc6"/><rect x="268.90" y="66.28" width="156.70" height="1.45" fill="#c6fcc6"/><rect x="268.90" y="69.58" width="156.70" height="1.45" fill="#c6fcc6"/><rect x="268.90" y="72.78" width="156.70" height="1.45" fill="#c6fcc6"/><rect x="268.90" y="76.08" width="156.70" height="1.45" fill="#c6fcc6"/><rect x="268.90" y="79.38" width="156.70" height="1.45" fill="#c6fcc6"/><rect x="268.90" y="82.68" width="156.70" height="1.45" fill="#c6fcc6"/><rect x="268.90" y="86.08" width="156.70" height="1.45" fill="#c6fcc6"/><rect x="271.30" y="55.95" width="10.40" height="1.9" fill="#74b896"/><rect x="269.20" y="59.35" width="9.50" height="1.9" fill="#74b896"/><rect x="286.20" y="59.35" width="13.10" height="1.9" fill="#74b896"/><rect x="326.00" y="59.35" width="8.70" height="1.9" fill="#74b896"/><rect x="344.00" y="59.35" width="7.00" height="1.9" fill="#74b896"/><rect x="358.00" y="59.35" width="10.00" height="1.9" fill="#74b896"/><rect x="415.00" y="59.35" width="10.00" height="1.9" fill="#74b896"/><rect x="286.20" y="62.65" width="11.40" height="1.9" fill="#74b896"/><rect x="269.00" y="66.05" width="6.00" height="1.9" fill="#74b896"/><rect x="286.20" y="66.05" width="12.30" height="1.9" fill="#74b896"/><rect x="269.00" y="69.35" width="6.00" height="1.9" fill="#74b896"/><rect x="286.20" y="69.35" width="6.80" height="1.9" fill="#74b896"/><rect x="269.00" y="72.55" width="6.00" height="1.9" fill="#74b896"/><rect x="286.20" y="72.55" width="6.80" height="1.9" fill="#74b896"/><rect x="269.00" y="75.85" width="6.00" height="1.9" fill="#74b896"/><rect x="286.20" y="75.85" width="19.80" height="1.9" fill="#74b896"/><rect x="269.00" y="79.15" width="6.00" height="1.9" fill="#74b896"/><rect x="286.20" y="79.15" width="19.80" height="1.9" fill="#74b896"/><rect x="269.00" y="82.45" width="6.00" height="1.9" fill="#74b896"/><rect x="286.20" y="82.45" width="19.80" height="1.9" fill="#74b896"/><rect x="269.00" y="85.85" width="6.00" height="1.9" fill="#74b896"/><rect x="286.20" y="85.85" width="19.80" height="1.9" fill="#74b896"/><rect x="346.10" y="62.00" width="2.4" height="26.60" fill="#14a514"/><rect x="362.60" y="62.00" width="2.4" height="26.60" fill="#14a514"/><rect x="267.60" y="54.90" width="159.40" height="189.60" fill="none" stroke="#f0824a" stroke-width="1"/><rect x="267.60" y="54.90" width="159.40" height="189.60" fill="none" stroke="#3c9b3c" stroke-width="1.1" stroke-dasharray="3.6 2.4"/><path d="M267.60 54.90 H427 M267.60 244.50 H427" stroke="#f0824a" stroke-width="1.7" fill="none"/><path d="M267.60 54.90 H427 M267.60 244.50 H427" stroke="#3c9b3c" stroke-width="1.8" stroke-dasharray="3.6 2.4" fill="none"/><circle cx="267.80" cy="55.50" r="3" fill="#000"/><circle cx="425.90" cy="55.50" r="3" fill="#000"/><circle cx="267.80" cy="243.90" r="3" fill="#000"/><circle cx="425.90" cy="243.90" r="3" fill="#000"/><circle cx="346.60" cy="150.00" r="3" fill="#000"/><path d="M344.00 168.00 H348.6 M346.30 165.70 V170.3" stroke="#6a8fd0" stroke-width="0.9" fill="none"/><path d="M255.20 288.00 L262.40 295.20 M262.40 288.00 L255.20 295.20" stroke="#262626" stroke-width="1.6" fill="none"/></svg>
<div style="left:774.5px;top:199px;width:174.5px;height:420px;background:#ececec;"></div>
<div style="left:830.2px;top:202.7px;width:65.4px;height:1px;background:#b9b9b9;"></div>
<div style="left:778.6px;top:208.2px;width:41.4px;height:26.8px;background:#ffffff;border-radius:6px;box-shadow:0 0.5px 1.2px rgba(0,0,0,0.25),0 0 0 0.5px rgba(0,0,0,0.04);"></div>
<svg style="left:787.7px;top:213.6px;" width="15" height="16" viewBox="0 0 15 16"><path d="M1.2 8 V4.6 L5 1 L8.8 4.6 V8 Z M5 1 L8 1.2 L11.2 4.6 V8 H8.8" fill="none" stroke="#2f2f2f" stroke-width="1.1" stroke-linejoin="round"/><path d="M4.4 8 V14.2 H8 M4.4 10.6 H8" fill="none" stroke="#2f2f2f" stroke-width="1.1"/><path d="M9.4 10.6 H13.6 M9.4 14.2 H13.6" stroke="#2f2f2f" stroke-width="1.8"/></svg>
<svg style="left:811.3px;top:217.6px;" width="5.4" height="7.2" viewBox="0 0 6 8"><path d="M1.2 1 L4.4 4 L1.2 7" fill="none" stroke="#1a1a1a" stroke-width="1.7" stroke-linecap="round" stroke-linejoin="round"/></svg>
<svg style="left:838.3px;top:214.5px;" width="19.4" height="15" viewBox="0 0 19.4 15"><path d="M0.8 14.2 V7 L6.4 0.8 L10.6 7 V14.2 Z M6.4 0.8 L10 1.4 L18.6 8.6 V14.2 H10.6 M10.6 7 L18.6 8.6" fill="none" stroke="#2f2f2f" stroke-width="1.2" stroke-linejoin="round"/></svg>
<svg style="left:867.7px;top:214.7px;" width="18.6" height="14.6" viewBox="0 0 18.6 14.6"><path d="M0.8 2 Q0.8 0.8 2 0.8 H7.8 V5.8 H16.6 Q17.8 5.8 17.8 7 V12.6 Q17.8 13.8 16.6 13.8 H2 Q0.8 13.8 0.8 12.6 Z" fill="none" stroke="#2f2f2f" stroke-width="1.2" stroke-linejoin="round"/><path d="M4 0.8 V3.4 H5.8" fill="none" stroke="#2f2f2f" stroke-width="0.9"/></svg>
<svg style="left:896.9px;top:213.7px;" width="18.6" height="17" viewBox="0 0 18.6 17"><path d="M4.6 3.4 H17.8 V15.6 H1 Z" fill="none" stroke="#2f2f2f" stroke-width="1.2" stroke-linejoin="round"/><path d="M1 15.6 L2.4 4.8 L4.6 0.8 V3.4 M2.6 15.4 L4.4 5" fill="none" stroke="#2f2f2f" stroke-width="1" stroke-linejoin="round"/><rect x="13" y="11" width="4.6" height="4.4" fill="#8a8a8a"/></svg>
<div style="left:921.3px;top:207.6px;width:28.1px;height:27.9px;background:#c7c7c7;border-radius:6px;"></div>
<svg style="left:927.1px;top:215.1px;" width="17" height="15.8" viewBox="0 0 17 15.8"><rect x="5.4" y="4.2" width="10.8" height="10.8" rx="2" fill="none" stroke="#555" stroke-width="1.1"/><rect x="3.1" y="2.5" width="10.8" height="10.8" rx="2" fill="#c7c7c7" stroke="#444" stroke-width="1.1"/><rect x="0.8" y="0.8" width="10.8" height="10.8" rx="2" fill="#c7c7c7" stroke="#2f2f2f" stroke-width="1.3"/><path d="M0.8 3.9 H11.6" stroke="#2f2f2f" stroke-width="1.7"/></svg>
<div style="left:778.6px;top:239.3px;width:150.2px;height:19.9px;background:#ffffff;border-radius:5.5px;box-shadow:0 0.5px 1.2px rgba(0,0,0,0.25),0 0 0 0.5px rgba(0,0,0,0.04);"></div>
<span style="left:795.8px;top:241.4px;height:16px;line-height:16px;font-size:11px;color:#262626;letter-spacing:0.062px;">1 - Layouts</span>
<svg style="left:919.7px;top:245.2px;" width="5.4" height="7.2" viewBox="0 0 6 8"><path d="M1.2 1 L4.4 4 L1.2 7" fill="none" stroke="#1a1a1a" stroke-width="1.7" stroke-linecap="round" stroke-linejoin="round"/></svg>
<div style="left:930.8px;top:239.3px;width:22.2px;height:19.9px;background:#ffffff;border-radius:5.5px;box-shadow:0 0.5px 1.2px rgba(0,0,0,0.25),0 0 0 0.5px rgba(0,0,0,0.04);"></div>
<svg style="left:934.9px;top:243.6px;" width="11" height="12" viewBox="0 0 11 12"><path d="M0.8 10.6 H3.6 Q6.6 10.6 6.6 7.6 V2" fill="none" stroke="#2f2f2f" stroke-width="1.7"/><path d="M3 5.4 L6.6 1.4 L10.2 5.4" fill="none" stroke="#2f2f2f" stroke-width="1.7" stroke-linejoin="round"/></svg>
<div style="left:775px;top:261.6px;width:174px;height:98.8px;background:#ffffff;"></div>
<div style="left:775px;top:285.7px;width:174px;height:22.3px;background:#dcdcdc;"></div>
<svg style="left:778.5px;top:271.2px;" width="9" height="6" viewBox="0 0 9 6"><path d="M1 1.2 L4.5 4.4 L8 1.2" fill="none" stroke="#858585" stroke-width="1.2" stroke-linecap="round" stroke-linejoin="round"/></svg>
<svg style="left:793.5px;top:265.9px;" width="18.6" height="17" viewBox="0 0 18.6 17"><path d="M4.4 3.6 H15.4 Q17.8 3.6 17.8 6 V13.6 Q17.8 16 15.4 16 H6.8 Q4.4 16 4.4 13.6 Z" fill="#fff" stroke="#2f2f2f" stroke-width="1.2"/><rect x="13" y="11.4" width="4.4" height="4.2" fill="#8a8a8a"/><path d="M2.6 0.8 V12" stroke="#2f2f2f" stroke-width="1.1"/><rect x="1" y="2.2" width="7.4" height="2.2" fill="#a8321f"/><path d="M2.8 9.4 H6 V12 L3.4 14.6 H1.4 Z" fill="#2f2f2f"/></svg>
<span style="left:815.9px;top:266.2px;height:16px;line-height:16px;font-size:11.3px;color:#262626;letter-spacing:0.086px;">Untitled</span>
<svg style="left:808px;top:288.2px;" width="15.2" height="17.6" viewBox="0 0 15.2 17.6"><path d="M5.4 0.8 H11.8 Q14.2 0.8 14.2 3.2 V14.4 Q14.2 16.8 11.8 16.8 H5.4 Q3.1 16.8 3.1 14.6 V3 Q3.1 0.8 5.4 0.8 Z" fill="#ffffff" stroke="#3d4247" stroke-width="1.2"/><rect x="1.5" y="3" width="10.2" height="2.6" rx="0.5" fill="#8e3426"/><path d="M2.2 4.3 H11" stroke="#b9604f" stroke-width="0.7"/><rect x="0" y="7.6" width="13.4" height="7.2" fill="#ffffff"/><text x="0.1" y="14.1" font-size="7.9" font-weight="bold" font-family="Liberation Sans, sans-serif" fill="#f0603a" textLength="13.5" lengthAdjust="spacingAndGlyphs">PDF</text></svg>
<span style="left:829.4px;top:289.2px;height:16px;line-height:16px;font-size:11px;color:#1e1e1e;letter-spacing:-0.001px;">Sheet Index</span>
<svg style="left:792.6px;top:317.3px;" width="9" height="6" viewBox="0 0 9 6"><path d="M1 1.2 L4.5 4.4 L8 1.2" fill="none" stroke="#858585" stroke-width="1.2" stroke-linecap="round" stroke-linejoin="round"/></svg>
<svg style="left:807px;top:311.8px;" width="18.6" height="16.4" viewBox="0 0 18.6 16.4"><path d="M1.4 10 V2.2 Q1.4 0.8 2.8 0.8 H7 L8.8 3 H16.2 Q17.6 3 17.6 4.4 V9" fill="#eaf0fa" stroke="#2f2f2f" stroke-width="1.1" stroke-linejoin="round"/><path d="M1.4 4.6 H17.6" stroke="#9db4da" stroke-width="0.8"/><path d="M2.2 9 H5.6 V11.6 L3.2 14.4 H1 Z" fill="#2f2f2f"/><path d="M7.4 12.6 H10" stroke="#2f2f2f" stroke-width="1.3"/><rect x="11.8" y="9.4" width="6" height="6" rx="1" fill="#fff" stroke="#2f2f2f" stroke-width="1.1"/><path d="M14.8 11 V13.8" stroke="#2f2f2f" stroke-width="1"/></svg>
<span style="left:829.4px;top:312.3px;height:16px;line-height:16px;font-size:11px;color:#262626;letter-spacing:-0.089px;">A.01 Floor Plans</span>
<svg style="left:821.9px;top:334.4px;" width="15.2" height="17.6" viewBox="0 0 15.2 17.6"><path d="M5.4 0.8 H11.8 Q14.2 0.8 14.2 3.2 V14.4 Q14.2 16.8 11.8 16.8 H5.4 Q3.1 16.8 3.1 14.6 V3 Q3.1 0.8 5.4 0.8 Z" fill="#ffffff" stroke="#3d4247" stroke-width="1.2"/><rect x="1.5" y="3" width="10.2" height="2.6" rx="0.5" fill="#8e3426"/><path d="M2.2 4.3 H11" stroke="#b9604f" stroke-width="0.7"/><rect x="0" y="7.6" width="13.4" height="7.2" fill="#ffffff"/><text x="0.1" y="14.1" font-size="7.9" font-weight="bold" font-family="Liberation Sans, sans-serif" fill="#f0603a" textLength="13.5" lengthAdjust="spacingAndGlyphs">PDF</text></svg>
<span style="left:842.9px;top:335.6px;height:16px;line-height:16px;font-size:11px;color:#262626;letter-spacing:-0.109px;">A.01.1 Ground Floor</span>
<div style="left:821px;top:357.4px;width:18px;height:3px;overflow:hidden;"><svg style="left:1.2px;top:0px" width="15.4" height="18.4" viewBox="0 0 15.4 18.4"><path d="M3.4 0.8 H11.4 Q14.4 0.8 14.4 3.8 V14.6 Q14.4 17.6 11.4 17.6 H5.4 Q3.4 17.6 3.4 15.6 Z" fill="#fff" stroke="#3a3a3a" stroke-width="1.1"/></svg></div>
<svg style="left:895.1px;top:368.5px;" width="19" height="17" viewBox="0 0 19 17"><path d="M7 3.6 H2 Q0.8 3.6 0.8 4.8 V14.8 Q0.8 16 2 16 H16 Q17.2 16 17.2 14.8 V10" fill="none" stroke="#2f2f2f" stroke-width="1.3"/><path d="M0.8 6.6 H6" stroke="#2f2f2f" stroke-width="1.1"/><circle cx="12.8" cy="5.6" r="4.8" fill="#eef4ff" stroke="#2f6fe0" stroke-width="1"/><path d="M10.2 5.6 H15.4 M12.8 3 V8.2" stroke="#2f6fe0" stroke-width="1.1"/></svg>
<svg style="left:927.1px;top:368.9px;" width="13" height="15" viewBox="0 0 13 15"><path d="M0.8 0.8 L12.2 14.2 M12.2 0.8 L0.8 14.2" stroke="#e23c14" stroke-width="1.5"/></svg>
<div style="left:777.6px;top:393px;width:170.6px;height:20.8px;background:#d9d9d9;border-radius:4px;"></div>
<svg style="left:784.4px;top:399.4px;" width="6" height="8" viewBox="0 0 6 8"><path d="M1.2 1 L4.4 4 L1.2 7" fill="none" stroke="#b0b0b0" stroke-width="1.1" stroke-linecap="round" stroke-linejoin="round"/></svg>
<span style="left:799.3px;top:395.6px;height:16px;line-height:16px;font-size:11px;color:#262626;letter-spacing:0.196px;">Properties</span>
<div style="left:777.6px;top:416.2px;width:170.6px;height:20.6px;background:#d9d9d9;border-radius:4px;"></div>
<svg style="left:782.7px;top:423.6px;" width="9" height="6" viewBox="0 0 9 6"><path d="M1 1.2 L4.5 4.4 L8 1.2" fill="none" stroke="#b8b8b8" stroke-width="1.1" stroke-linecap="round" stroke-linejoin="round"/></svg>
<span style="left:799.3px;top:418.7px;height:16px;line-height:16px;font-size:11px;color:#262626;letter-spacing:0.044px;">Format</span>
<div style="left:778.5px;top:439px;width:168.5px;height:19px;background:#ffffff;border-radius:5.5px;box-shadow:0 0.5px 1.2px rgba(0,0,0,0.25),0 0 0 0.5px rgba(0,0,0,0.04);"></div>
<svg style="left:786px;top:439.6px;" width="15.2" height="17.6" viewBox="0 0 15.2 17.6"><path d="M5.4 0.8 H11.8 Q14.2 0.8 14.2 3.2 V14.4 Q14.2 16.8 11.8 16.8 H5.4 Q3.1 16.8 3.1 14.6 V3 Q3.1 0.8 5.4 0.8 Z" fill="#ffffff" stroke="#3d4247" stroke-width="1.2"/><rect x="1.5" y="3" width="10.2" height="2.6" rx="0.5" fill="#8e3426"/><path d="M2.2 4.3 H11" stroke="#b9604f" stroke-width="0.7"/><rect x="0" y="7.6" width="13.4" height="7.2" fill="#ffffff"/><text x="0.1" y="14.1" font-size="7.9" font-weight="bold" font-family="Liberation Sans, sans-serif" fill="#f0603a" textLength="13.5" lengthAdjust="spacingAndGlyphs">PDF</text></svg>
<span style="left:807.9px;top:440.3px;height:16px;line-height:16px;font-size:11px;color:#262626;letter-spacing:-0.534px;">PDF</span>
<div style="left:930px;top:441.2px;width:15.2px;height:15px;background:#1f78f0;border-radius:4px;"></div>
<svg style="left:933.6px;top:442.7px;" width="8" height="12" viewBox="0 0 8 12"><path d="M1.4 4.4 L4 1.8 L6.6 4.4 M1.4 7.6 L4 10.2 L6.6 7.6" fill="none" stroke="#fff" stroke-width="1.4" stroke-linecap="round" stroke-linejoin="round"/></svg>
<div style="left:778.5px;top:493px;width:168.8px;height:19px;background:#ffffff;border-radius:5.5px;box-shadow:0 0.5px 1.2px rgba(0,0,0,0.25),0 0 0 0.5px rgba(0,0,0,0.04);"></div>
<span style="left:811.2px;top:495px;height:16px;line-height:16px;font-size:11px;color:#262626;letter-spacing:0.133px;">Document Options...</span>
<div style="left:778.5px;top:521.6px;width:10.4px;height:10.4px;background:#f3f3f3;border-radius:2.6px;box-shadow:0 0 0 0.6px rgba(0,0,0,0.12);"></div>
<span style="left:793.6px;top:519px;height:16px;line-height:16px;font-size:11px;color:#8b8b8b;letter-spacing:0.135px;">Crop image to Zoom</span>
<span style="left:778px;top:549.8px;height:16px;line-height:16px;font-size:11px;color:#262626;letter-spacing:0.014px;">Created:</span>
<div style="left:846.3px;top:551px;width:12px;height:12px;background:#fff;border-radius:6px;box-shadow:0 0.5px 1.2px rgba(0,0,0,0.25),0 0 0 0.5px rgba(0,0,0,0.04);"></div>
<svg style="left:850.15px;top:553.6px;" width="5.1" height="6.8" viewBox="0 0 6 8"><path d="M1.2 1 L4.4 4 L1.2 7" fill="none" stroke="#1a1a1a" stroke-width="1.7" stroke-linecap="round" stroke-linejoin="round"/></svg>
<div style="left:774.5px;top:569px;width:174.5px;height:1px;background:#dadada;"></div>
<div style="left:778.5px;top:573.8px;width:132.9px;height:19px;background:#ffffff;border-radius:5.5px;box-shadow:0 0.5px 1.2px rgba(0,0,0,0.25),0 0 0 0.5px rgba(0,0,0,0.04);"></div>
<span style="left:826.5px;top:575.6px;height:16px;line-height:16px;font-size:11px;color:#262626;letter-spacing:0.103px;">Publish</span>
<div style="left:915.2px;top:573.8px;width:32.1px;height:19px;background:#ffffff;border-radius:5.5px;box-shadow:0 0.5px 1.2px rgba(0,0,0,0.25),0 0 0 0.5px rgba(0,0,0,0.04);"></div>
<svg style="left:919.4px;top:576.4px;" width="14" height="14" viewBox="0 0 14 14"><circle cx="2" cy="1.8" r="1.2" fill="none" stroke="#2f2f2f" stroke-width="0.9"/><path d="M2 3 V12.6" stroke="#2f2f2f" stroke-width="1" stroke-dasharray="1.4 1"/><path d="M2 5.6 H4.6 M2 9 H4.6 M2 12.4 H4.6" stroke="#2f2f2f" stroke-width="1" stroke-dasharray="1.2 0.8"/><path d="M6.6 5.6 H13.4 M6.6 9 H13.4 M6.6 12.4 H13.4" stroke="#4a4a4a" stroke-width="1.2"/></svg>
<svg style="left:938.5px;top:579px;" width="5.4" height="7.2" viewBox="0 0 6 8"><path d="M1.2 1 L4.4 4 L1.2 7" fill="none" stroke="#1a1a1a" stroke-width="1.7" stroke-linecap="round" stroke-linejoin="round"/></svg>
<div style="left:72px;top:577.3px;width:702.5px;height:18.1px;background:#f0f0f0;"></div>
<div style="left:72px;top:595.4px;width:702.5px;height:23.6px;background:#ececec;"></div>
<div style="left:140.2px;top:578px;width:1px;height:17px;background:#d6d6d6;"></div>
<div style="left:254.1px;top:578px;width:1px;height:17px;background:#d6d6d6;"></div>
<div style="left:371.1px;top:578px;width:1px;height:17px;background:#d6d6d6;"></div>
<div style="left:487px;top:578px;width:1px;height:17px;background:#d6d6d6;"></div>
<div style="left:603.1px;top:578px;width:1px;height:17px;background:#d6d6d6;"></div>
<svg style="left:74.5px;top:579.5px;" width="16.4" height="15.4" viewBox="0 0 16.4 15.4"><circle cx="9.6" cy="6.4" r="5.6" fill="none" stroke="#2f2f2f" stroke-width="1.2"/><path d="M5.6 10.6 L1.6 14.4" stroke="#2f2f2f" stroke-width="1.3" stroke-linecap="round"/><path d="M0.8 6.4 H9 M3.4 3.8 L0.8 6.4 L3.4 9" fill="none" stroke="#2f2f2f" stroke-width="1.2"/><path d="M2 5 V7.8" stroke="#f0f0f0" stroke-width="0"/></svg>
<svg style="left:96.4px;top:579.5px;" width="16.4" height="15.4" viewBox="0 0 16.4 15.4"><g transform="translate(16.4,0) scale(-1,1)"><circle cx="9.6" cy="6.4" r="5.6" fill="none" stroke="#b4b4b4" stroke-width="1.2"/><path d="M5.6 10.6 L1.6 14.4" stroke="#b4b4b4" stroke-width="1.3" stroke-linecap="round"/><path d="M0.8 6.4 H9 M3.4 3.8 L0.8 6.4 L3.4 9" fill="none" stroke="#b4b4b4" stroke-width="1.2"/><path d="M2 5 V7.8" stroke="#f0f0f0" stroke-width="0"/></g></svg>
<svg style="left:119.2px;top:579.5px;" width="16.4" height="15.4" viewBox="0 0 16.4 15.4"><circle cx="6.6" cy="6.4" r="5.6" fill="none" stroke="#2f2f2f" stroke-width="1.2"/><path d="M10.8 10.6 L15 14.6" stroke="#2f2f2f" stroke-width="1.3" stroke-linecap="round"/><path d="M3.8 6.4 H9.4 M6.6 3.6 V9.2" stroke="#2f2f2f" stroke-width="1.2"/></svg>
<svg style="left:150.1px;top:581.9px;" width="7.4" height="9.4" viewBox="0 0 7.4 9.4"><path d="M6.5 0.9 V8.5 L1 4.7 Z" fill="none" stroke="#b4b4b4" stroke-width="1.1" stroke-linejoin="round"/></svg>
<span style="left:190.7px;top:578.8px;height:16px;line-height:16px;font-size:11px;color:#262626;letter-spacing:-0.331px;">1/8</span>
<svg style="left:237.1px;top:581.9px;" width="7.4" height="9.4" viewBox="0 0 7.4 9.4"><path d="M0.9 0.9 V8.5 L6.4 4.7 Z" fill="none" stroke="#2f2f2f" stroke-width="1.2" stroke-linejoin="round"/></svg>
<svg style="left:260.4px;top:579.5px;" width="16.4" height="15.4" viewBox="0 0 16.4 15.4"><circle cx="6.6" cy="6.4" r="5.6" fill="none" stroke="#2f2f2f" stroke-width="1.2"/><path d="M10.8 10.6 L15 14.6" stroke="#2f2f2f" stroke-width="1.3" stroke-linecap="round"/><path d="M6.6 2.2 L5.2 4.2 H8 Z M6.6 10.6 L5.2 8.6 H8 Z M2.4 6.4 L4.4 5 V7.8 Z M10.8 6.4 L8.8 5 V7.8 Z" fill="#2f2f2f"/></svg>
<span style="left:309.2px;top:578.8px;height:16px;line-height:16px;font-size:11px;color:#262626;letter-spacing:-0.072px;">20%</span>
<svg style="left:359.3px;top:582.8px;" width="5.4" height="7.2" viewBox="0 0 6 8"><path d="M1.2 1 L4.4 4 L1.2 7" fill="none" stroke="#1a1a1a" stroke-width="1.7" stroke-linecap="round" stroke-linejoin="round"/></svg>
<svg style="left:377.9px;top:581.1px;" width="13.4" height="11" viewBox="0 0 13.4 11"><path d="M0.8 4.6 L5.2 0.8 L9.2 5 L4.8 8.8 Z" fill="none" stroke="#8e8e8e" stroke-width="1.1" stroke-linejoin="round"/><path d="M7.6 10 H10.8 Q11.4 10 11.4 9.4 V6 M9.8 7.4 L11.4 5.6 L12.8 7.4" fill="none" stroke="#8e8e8e" stroke-width="1.1"/></svg>
<span style="left:427.7px;top:578.8px;height:16px;line-height:16px;font-size:11px;color:#b2b2b2;letter-spacing:-0.479px;">N/A</span>
<svg style="left:475.5px;top:582.8px;" width="5.4" height="7.2" viewBox="0 0 6 8"><path d="M1.2 1 L4.4 4 L1.2 7" fill="none" stroke="#a8a8a8" stroke-width="1.2" stroke-linecap="round" stroke-linejoin="round"/></svg>
<svg style="left:493.9px;top:583.2px;" width="14.6" height="6.8" viewBox="0 0 14.6 6.8"><rect x="0.7" y="0.7" width="13.2" height="5.4" rx="0.8" fill="none" stroke="#7c7c7c" stroke-width="1.2"/><path d="M3.9 6 V3.9 M7.3 6 V3.9 M10.7 6 V3.9" stroke="#7c7c7c" stroke-width="1"/></svg>
<span style="left:543.5px;top:578.8px;height:16px;line-height:16px;font-size:11px;color:#b2b2b2;letter-spacing:-0.312px;">N/A</span>
<svg style="left:591.5px;top:582.8px;" width="5.4" height="7.2" viewBox="0 0 6 8"><path d="M1.2 1 L4.4 4 L1.2 7" fill="none" stroke="#a8a8a8" stroke-width="1.2" stroke-linecap="round" stroke-linejoin="round"/></svg>
<svg style="left:609.3px;top:580.3px;" width="15" height="13" viewBox="0 0 15 13"><path d="M3.4 1 H14 L11.4 4.6 H0.8 Z M2.4 5.6 L0.8 8 H11.4 L13.2 5.4 M2.4 9 L0.8 11.6 H11.4 L13.2 8.8" fill="none" stroke="#2f2f2f" stroke-width="1" stroke-linejoin="round"/></svg>
<span style="left:640.5px;top:578.8px;height:16px;line-height:16px;font-size:11px;color:#262626;letter-spacing:0.272px;">02 Drafting</span>
<svg style="left:707.7px;top:582.4px;" width="5.4" height="7.2" viewBox="0 0 6 8"><path d="M1.2 1 L4.4 4 L1.2 7" fill="none" stroke="#1a1a1a" stroke-width="1.7" stroke-linecap="round" stroke-linejoin="round"/></svg>
<svg style="left:806.8px;top:599.6px;" width="14.4" height="12.4" viewBox="0 0 14.4 12.4"><rect x="0.7" y="0.7" width="10.6" height="8" rx="1" fill="none" stroke="#2f2f2f" stroke-width="1.1"/><rect x="3.1" y="3.6" width="10.6" height="8" rx="1" fill="#ececec" stroke="#2f2f2f" stroke-width="1.2"/></svg>
<div style="left:832px;top:600px;width:1px;height:12px;background:#b9b9b9;"></div>
<span style="left:843.2px;top:597.4px;height:17px;line-height:17px;font-size:13.6px;color:#a6a6a6;-webkit-text-stroke:0;letter-spacing:0.1px;transform-origin:0 50%;transform:scaleX(0.885);">GRAPHISOFT <span style="position:static;display:inline;color:#c2c2c2;-webkit-text-stroke:0;">ID</span></span>
<div style="left:949px;top:42px;width:26px;height:592px;background:#2f3133;"></div>
<div style="left:0px;top:619px;width:975px;height:15px;background:#2f3133;"></div>
<svg style="left:26px;top:612px" width="7" height="7" viewBox="0 0 6 6"><path d="M0 0 V6 H6 Q0 6 0 0 Z" fill="#fff"/></svg>
<svg style="left:942px;top:612px" width="7" height="7" viewBox="0 0 6 6"><path d="M6 0 V6 H0 Q6 6 6 0 Z" fill="#fff"/></svg>
</div>
</body></html>
